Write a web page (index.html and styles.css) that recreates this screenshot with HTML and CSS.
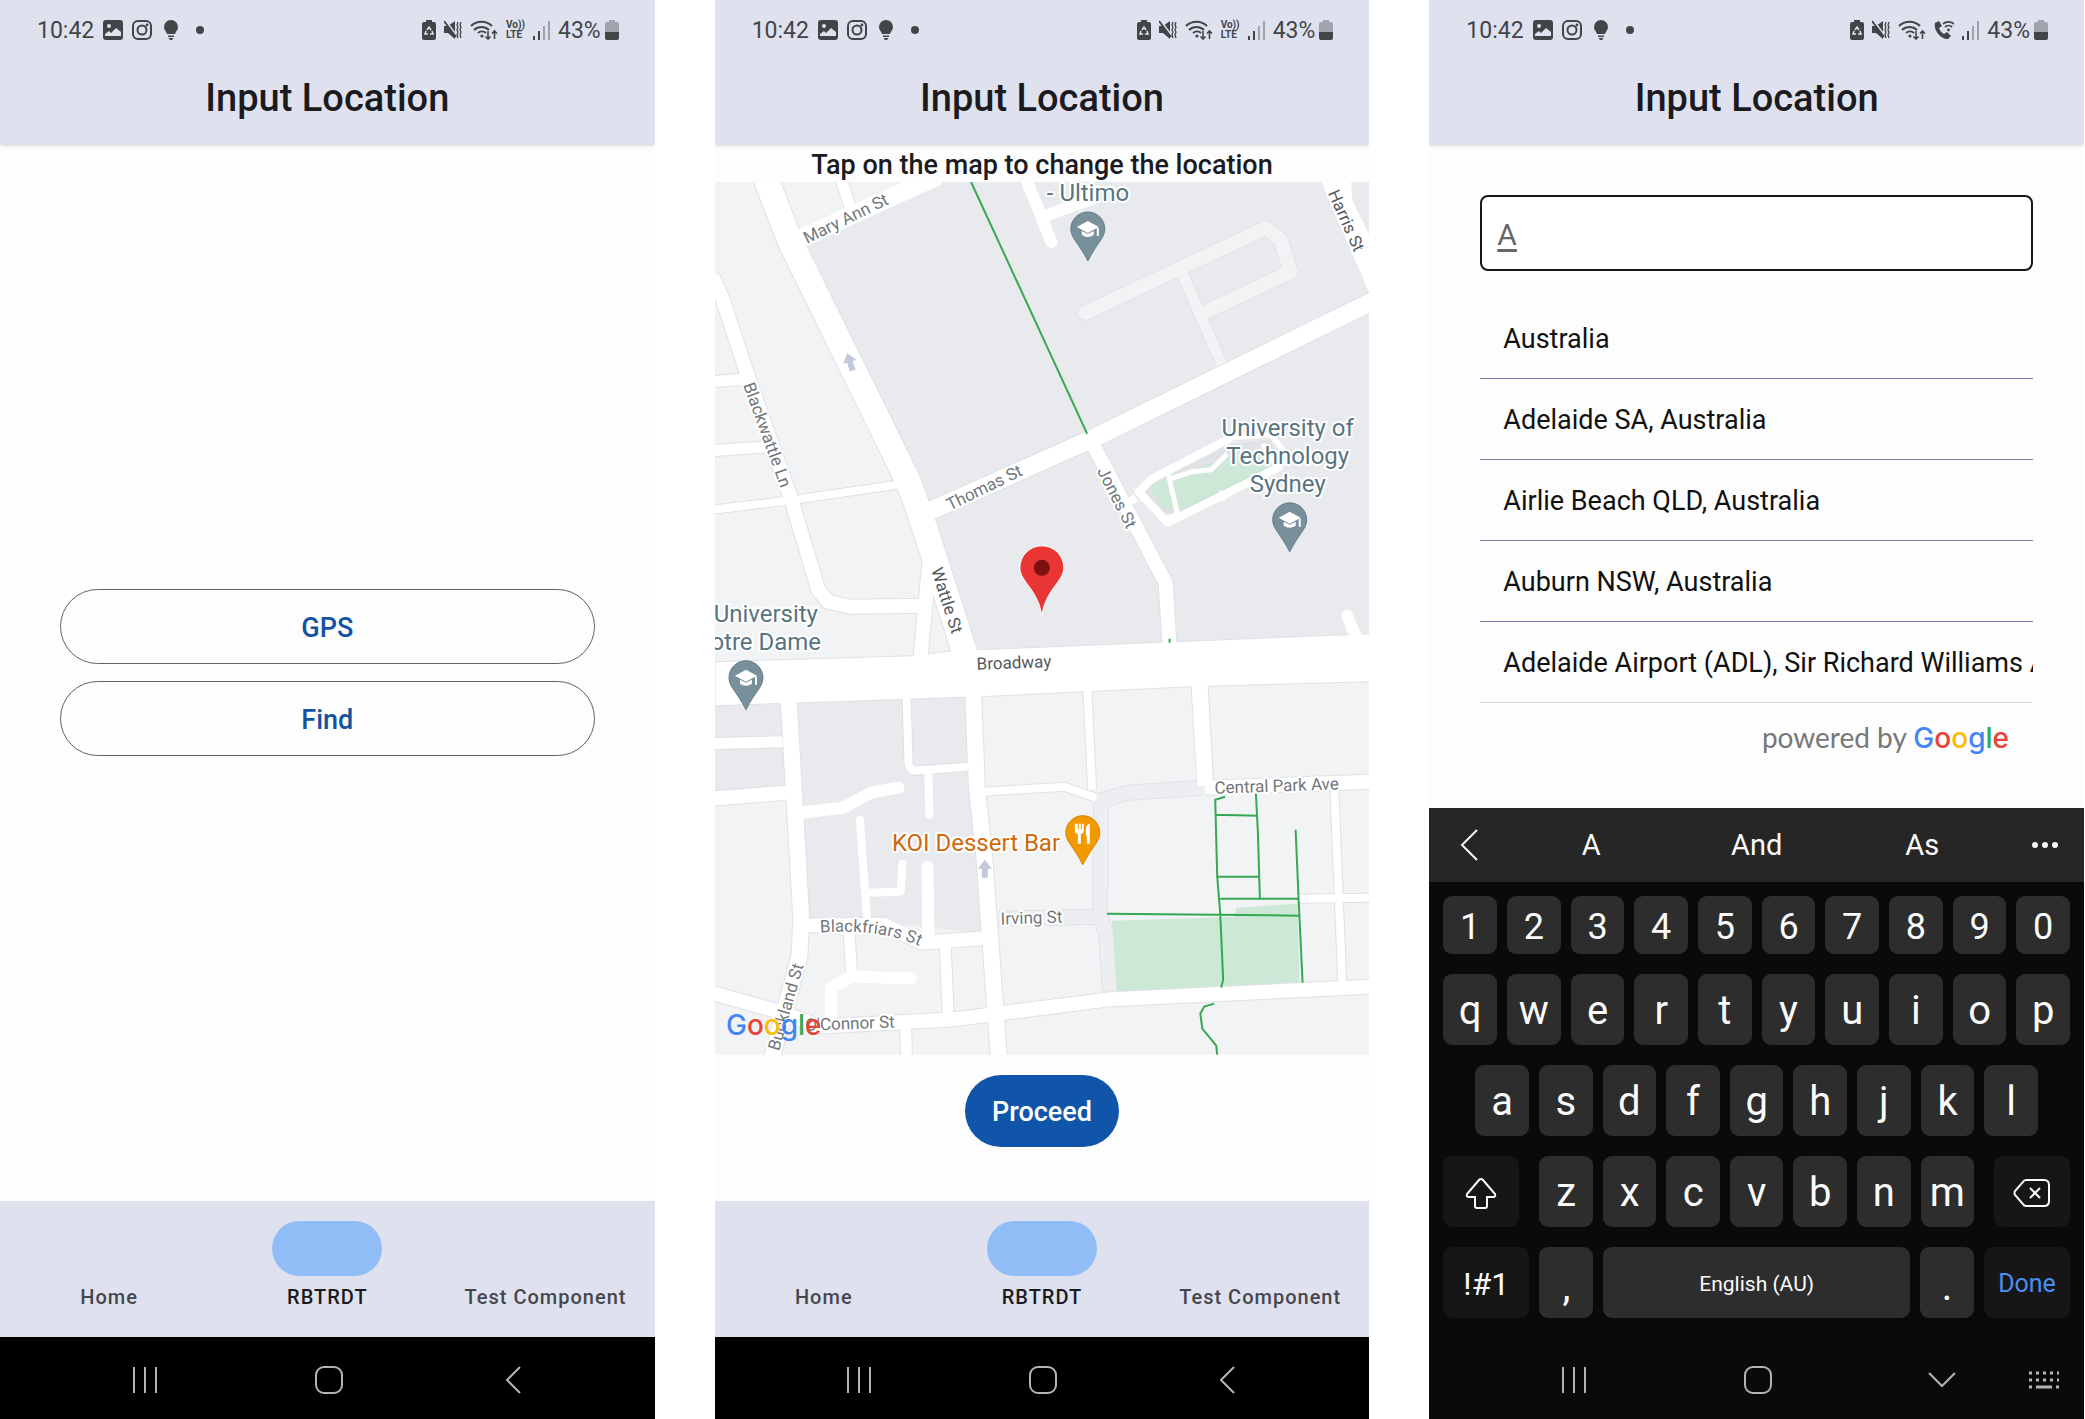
FILE: index.html
```html
<!DOCTYPE html>
<html lang="en">
<head>
<meta charset="utf-8">
<meta name="viewport" content="width=device-width, initial-scale=1">
<title>Input Location</title>
<link rel="stylesheet" href="styles.css">
</head>
<body>
<svg class="sprite" aria-hidden="true">
  <symbol id="i-photo" viewBox="0 0 20 20"><path fill-rule="evenodd" fill="currentColor" d="M3 0h14a3 3 0 0 1 3 3v14a3 3 0 0 1-3 3H3a3 3 0 0 1-3-3V3a3 3 0 0 1 3-3zM6 4a2 2 0 1 0 0 4 2 2 0 0 0 0-4zM2 16h16v-4l-5-4-5 5-2-2-4 3z"/></symbol>
  <symbol id="i-insta" viewBox="0 0 20 20"><rect x="1" y="1" width="18" height="18" rx="5" fill="none" stroke="currentColor" stroke-width="2"/><circle cx="10" cy="10" r="4.500" fill="none" stroke="currentColor" stroke-width="2"/><circle cx="15" cy="5" r="1.400" fill="currentColor"/></symbol>
  <symbol id="i-bulb" viewBox="0 0 14 20"><path fill="currentColor" d="M7 0a7 7 0 0 1 7 7c0 3-2 4-3 7H3C2 11 0 10 0 7a7 7 0 0 1 7-7zM4 15.500h6V17H4zM4.500 18h5L8 20H6z"/></symbol>
  <symbol id="i-saver" viewBox="0 0 14 20"><path fill="currentColor" d="M4 0h6v2h2a2 2 0 0 1 2 2v14a2 2 0 0 1-2 2H2a2 2 0 0 1-2-2V4a2 2 0 0 1 2-2h2z"/><path d="M5 10l2-3 2 3M10 11l1 3H8M6 14H3l1-3" fill="none" stroke="#dfe2ee" stroke-width="1.500"/></symbol>
  <symbol id="i-mute" viewBox="0 0 18 20"><path fill="currentColor" d="M0 6h4l7-5v18l-7-6H0z"/><path d="M1 0l12 16" stroke="#dfe2ee" stroke-width="2"/><path d="M0 1l12 16" stroke="currentColor" stroke-width="1.800"/><path d="M14 2l-1 3 1 2-1 3 1 2-1 3 1 3M17 2l-1 3 1 2-1 3 1 2-1 3 1 3" fill="none" stroke="currentColor" stroke-width="1.300"/></symbol>
  <symbol id="i-wifi" viewBox="0 0 28 20"><g fill="none" stroke="currentColor" stroke-width="2"><path d="M1 6a15 15 0 0 1 21 0M4 10a11 11 0 0 1 15 0M8 13a6 6 0 0 1 8 0"/><path stroke-width="1.600" d="M18 11v8M15.500 16.500L18 19l2.500-2.500M24.500 19v-8M22 13.500l2.500-2.500 2.500 2.500"/></g><circle cx="12" cy="16" r="1.600" fill="currentColor"/></symbol>
  <symbol id="i-call" viewBox="0 0 20 20"><path fill="currentColor" d="M1 3l4-2 3 5-3 2c1 3 3 5 5 6l3-2 4 4-3 3C8 20-1 11 1 3z"/><path d="M9 4a8 8 0 0 1 11 0M11 7a5 5 0 0 1 7 0" fill="none" stroke="currentColor" stroke-width="1.800"/><circle cx="14.500" cy="10" r="1.400" fill="currentColor"/></symbol>
  <symbol id="i-signal" viewBox="0 0 17 20"><path d="M1 16v4M6 11v9" stroke="currentColor" stroke-width="2"/><path d="M11 6v14M16 1v19" stroke="currentColor" stroke-width="2" opacity=".4"/></symbol>
  <symbol id="i-battery" viewBox="0 0 14 20"><path opacity=".4" fill="currentColor" d="M4 0h6v2h2a2 2 0 0 1 2 2v8H0V4a2 2 0 0 1 2-2h2z"/><path fill="currentColor" d="M0 12h14v6a2 2 0 0 1-2 2H2a2 2 0 0 1-2-2z"/></symbol>
  <symbol id="i-recents" viewBox="0 0 28 28"><path d="M3 1v26M14 1v26M25 1v26" fill="none" stroke="currentColor" stroke-width="2"/></symbol>
  <symbol id="i-home" viewBox="0 0 28 28"><rect x="1" y="1" width="26" height="26" rx="8" fill="none" stroke="currentColor" stroke-width="2"/></symbol>
  <symbol id="i-back" viewBox="0 0 28 28"><path d="M21 1L8 14l13 13" fill="none" stroke="currentColor" stroke-width="2"/></symbol>
  <symbol id="i-down" viewBox="0 0 28 28"><path d="M1 7l13 13L27 7" fill="none" stroke="currentColor" stroke-width="2"/></symbol>
  <symbol id="i-grad" viewBox="0 0 36 52"><path d="M18 1a17 17 0 0 1 17 17c0 9-8 14-17 32C9 32 1 27 1 18A17 17 0 0 1 18 1z" fill="#78909c" stroke="#607b87"/><path d="M18 10l11 6-11 6-11-6zM12 20l6 3 6-3v4q-6 4-12 0zM27 17h2v8h-2z" fill="#fff"/></symbol>
</svg>

<div class="screens">

<section class="phone">
  <header class="top">
    <div class="status">
      <span>10:42</span>
      <svg class="ic20"><use href="#i-photo"/></svg>
      <svg class="ic20"><use href="#i-insta"/></svg>
      <svg class="ic14"><use href="#i-bulb"/></svg>
      <i class="dot"></i>
      <span class="status-end">
        <svg class="ic14"><use href="#i-saver"/></svg>
        <svg class="ic18"><use href="#i-mute"/></svg>
        <svg class="ic28"><use href="#i-wifi"/></svg>
        <span class="volte"><b>Vo))</b><b>LTE</b></span>
        <svg class="ic17"><use href="#i-signal"/></svg>
        <span class="charge">43%<svg class="ic14"><use href="#i-battery"/></svg></span>
      </span>
    </div>
    <h1>Input Location</h1>
  </header>
  <main class="choices">
    <button class="outlined">GPS</button>
    <button class="outlined">Find</button>
  </main>
  <nav class="tabs">
    <a href="#home"><i></i>Home</a>
    <a href="#rbtrdt" class="active"><i></i>RBTRDT</a>
    <a href="#test"><i></i>Test Component</a>
  </nav>
  <div class="sysbar">
    <button aria-label="Recents"><svg><use href="#i-recents"/></svg></button>
    <button aria-label="Home"><svg><use href="#i-home"/></svg></button>
    <button aria-label="Back"><svg><use href="#i-back"/></svg></button>
  </div>
</section>

<section class="phone">
  <header class="top">
    <div class="status">
      <span>10:42</span>
      <svg class="ic20"><use href="#i-photo"/></svg>
      <svg class="ic20"><use href="#i-insta"/></svg>
      <svg class="ic14"><use href="#i-bulb"/></svg>
      <i class="dot"></i>
      <span class="status-end">
        <svg class="ic14"><use href="#i-saver"/></svg>
        <svg class="ic18"><use href="#i-mute"/></svg>
        <svg class="ic28"><use href="#i-wifi"/></svg>
        <span class="volte"><b>Vo))</b><b>LTE</b></span>
        <svg class="ic17"><use href="#i-signal"/></svg>
        <span class="charge">43%<svg class="ic14"><use href="#i-battery"/></svg></span>
      </span>
    </div>
    <h1>Input Location</h1>
  </header>
  <main class="mapview">
    <p class="hint">Tap on the map to change the location</p>
    <svg class="map" viewBox="0 0 655 873" role="img" aria-label="Map of Ultimo, Sydney">
      <rect width="655" height="873" fill="#f1f3f4"/>
      <g transform="scale(.993 1)">
      <!-- built-up blocks -->
      <g fill="#e8eaed">
        <path d="M88 58L225 0H660V453L255 470 224 381 205 330z"/>
        <path d="M0 522L70 520 76 614 0 620z"/>
        <path d="M81 518L255 514 272 752 182 742 92 738z"/>
      </g>
      <!-- service lanes -->
      <g fill="none" stroke-linejoin="round">
        <path class="lane-edge w16" d="M490 606L416 611 389 619 388 735 394 751 398 812M280 737L388 735"/>
        <path class="lane w14" d="M490 606L416 611 389 619 388 735 394 751 398 812M280 737L388 735"/>
        <g stroke-linecap="round">
          <path class="lane-edge w16" d="M373 131L555 46 570 58 580 90 492 131"/>
          <path class="lane-edge w13" d="M471 92L515 192"/>
          <path class="walk w14" d="M373 131L555 46 570 58 580 90 492 131"/>
          <path class="walk w11" d="M471 92L515 192"/>
        </g>
      </g>
      <!-- parks -->
      <path d="M400 739L524 735 525 726 587 722 589 801 405 811z" fill="#cde8d6"/>
      <path d="M428 308L520 262 560 258 570 282 460 338z" fill="#e0e2e5"/>
      <path d="M437 305L456 296 522 274 556 272 560 287 471 328 452 327z" fill="#cde8d6"/>
      <!-- streets: edge then surface -->
      <g class="edge">
        <path class="w27" d="M51 -4L76 60 194 298 206 330 224 385 253 475"/>
        <path class="w20" d="M206 334L382 256 665 118"/>
        <path class="w18" d="M74 514L81 635 87 738 85 775 57 877M260 510L264 608 271 671 282 821 286 877M488 500L494 600"/>
        <path class="w16" d="M-3 94L8 118 32 191 77 318 104 408 114 420 136 425 210 424M-4 617L72 611M216 380L207 476M380 261L454 401 458 464M87 744L170 743 208 761 280 756M494 606L660 600M-4 811L68 831 106 845 238 838 293 831 395 818 660 805"/>
        <path class="w13" d="M127 -3L136 25M-4 200L30 197M-4 269L50 265M-4 562L68 560M135 751L138 795M232 763L235 835M192 843L193 877"/>
        <path class="w10" d="M-4 328L72 319 190 302M193 514L195 583 199 589 255 585M375 504L380 608M271 610L352 605 384 616M624 606L632 801M587 717L660 716"/>
      </g>
      <path d="M0 480L199 474 240 469 660 452V500L479 505 267 515 0 524z" fill="#fff" stroke="#dfe1e5"/>
      <path d="M611 0H641L642 18 660 55V113z" fill="#fff"/>
      <g class="road">
        <path class="w25" d="M51 -4L76 60 194 298 206 330 224 385 253 475"/>
        <path class="w18" d="M206 334L382 256 665 118M85 57L225 -6"/>
        <path class="w16" d="M74 514L81 635 87 738 85 775 57 877M260 510L264 608 271 671 282 821 286 877M488 500L494 604"/>
        <path class="w14" d="M-3 94L8 118 32 191 77 318 104 408 114 420 136 425 210 424M-4 617L72 611M216 380L207 476M380 261L454 401 458 464M87 744L170 743 208 761 280 756M494 606L660 600M-4 811L68 831 106 845 238 838 293 831 395 818 660 805"/>
        <path class="w11" d="M127 -3L136 25M-4 200L30 197M-4 269L50 265M-4 562L68 560M135 751L138 795M232 763L235 835M192 843L193 877"/>
        <path class="w8" d="M-4 328L72 319 190 302M193 514L195 583 199 589 255 585M375 504L380 608M271 610L352 605 384 616M624 606L632 801M587 717L660 716"/>
        <g stroke-linecap="round">
          <path class="w12" d="M313 -4L339 60M335 33L382 16M637 434L647 458M87 631L129 626 157 611 185 606M214 685L215 751M197 797L138 795 117 806 117 840"/>
          <path class="w8" d="M215 590L216 633M146 638L153 735M154 711L187 710 189 682"/>
        </g>
        <path class="w8" d="M413 323L424 316M571 284L456 341 427 310 440 297 520 256"/>
        <path class="w5" d="M520 256L560 253 574 270 571 284M456 288L458 298 466 332M456 298L480 290 500 288 516 272M552 262L562 280M508 310L514 318M454 336L470 332"/>
      </g>
      <!-- cycleways -->
      <g fill="none" stroke="#34a853" stroke-width="2">
        <path d="M258 0L375 252M458 457v4"/>
        <path d="M514 615L504 618 506 695 509 731 512 798 510 806M545 612L547 651 549 717M504 633L547 634M507 695L548 695M509 717L587 717M395 732L588 734M585 648L588 717 592 801M503 822L493 825 489 832 491 847 505 864 506 873"/>
      </g>
      </g>
      <g fill="#c3c9dd">
        <path d="M0-9L7 0H3V9H-3V0H-7z" transform="translate(135 180) rotate(-18)"/>
        <path d="M0-9L7 0H3V9H-3V0H-7z" transform="translate(270 687)"/>
      </g>
      <!-- street names -->
      <g class="street">
        <text transform="translate(92 62) rotate(-26)">Mary Ann St</text>
        <text transform="translate(28 203) rotate(70)">Blackwattle Ln</text>
        <text transform="translate(235 329) rotate(-26)">Thomas St</text>
        <text transform="translate(382 289) rotate(63)">Jones St</text>
        <text class="major" transform="translate(216 388) rotate(72)">Wattle St</text>
        <text class="major" transform="translate(613 11) rotate(66)">Harris St</text>
        <text class="major" transform="translate(262 488) rotate(-2)">Broadway</text>
        <text transform="translate(500 612) rotate(-2)">Central Park Ave</text>
        <text transform="translate(286 743) rotate(-2)">Irving St</text>
        <path id="bf" d="M105 751Q170 746 212 768" fill="none"/>
        <text><textPath href="#bf">Blackfriars St</textPath></text>
        <text transform="translate(180 846) rotate(-2)" text-anchor="end">O'Connor St</text>
        <text transform="translate(64 870) rotate(-74)">Buckland St</text>
      </g>
      <g class="place">
        <text x="332" y="19">- Ultimo</text>
        <text x="573" y="254" text-anchor="middle">University of</text>
        <text x="573" y="282" text-anchor="middle">Technology</text>
        <text x="573" y="310" text-anchor="middle">Sydney</text>
        <text x="103" y="440" text-anchor="end">University</text>
        <text x="106" y="468" text-anchor="end">Notre Dame</text>
        <text class="food" x="177" y="669">KOI Dessert Bar</text>
      </g>
      <use href="#i-grad" x="355" y="29" width="36" height="52"/>
      <use href="#i-grad" x="557" y="320" width="36" height="52"/>
      <use href="#i-grad" x="13" y="478" width="36" height="52"/>
      <g transform="translate(350 633)">
        <path d="M18 1a17 17 0 0 1 17 17c0 9-8 14-17 32C9 32 1 27 1 18A17 17 0 0 1 18 1z" fill="#f29900" stroke="#d98300"/>
        <path d="M10 9v7q0 3 3 3v10h3V19q3 0 3-3V9h-2v6h-1V9h-2v6h-1V9zM25 9q-4 1-4 6v6h1v8h3z" fill="#fff"/>
      </g>
      <g transform="translate(327 364)">
        <path d="M0 0a22 22 0 0 1 22 22c0 14-19 22-22 49C-3 44-22 36-22 22A22 22 0 0 1 0 0z" fill="#ea3535" stroke="#fff"/>
        <circle cy="22" r="8" fill="#7d1010"/>
      </g>
      <text class="glogo" x="11" y="853"><tspan class="gb">G</tspan><tspan class="gr">o</tspan><tspan class="gy">o</tspan><tspan class="gb">g</tspan><tspan class="gg">l</tspan><tspan class="gr">e</tspan></text>
    </svg>
    <div class="actions"><button class="filled">Proceed</button></div>
  </main>
  <nav class="tabs">
    <a href="#home"><i></i>Home</a>
    <a href="#rbtrdt" class="active"><i></i>RBTRDT</a>
    <a href="#test"><i></i>Test Component</a>
  </nav>
  <div class="sysbar">
    <button aria-label="Recents"><svg><use href="#i-recents"/></svg></button>
    <button aria-label="Home"><svg><use href="#i-home"/></svg></button>
    <button aria-label="Back"><svg><use href="#i-back"/></svg></button>
  </div>
</section>

<section class="phone">
  <header class="top">
    <div class="status">
      <span>10:42</span>
      <svg class="ic20"><use href="#i-photo"/></svg>
      <svg class="ic20"><use href="#i-insta"/></svg>
      <svg class="ic14"><use href="#i-bulb"/></svg>
      <i class="dot"></i>
      <span class="status-end">
        <svg class="ic14"><use href="#i-saver"/></svg>
        <svg class="ic18"><use href="#i-mute"/></svg>
        <svg class="ic28"><use href="#i-wifi"/></svg>
        <svg class="ic20"><use href="#i-call"/></svg>
        <svg class="ic17"><use href="#i-signal"/></svg>
        <span class="charge">43%<svg class="ic14"><use href="#i-battery"/></svg></span>
      </span>
    </div>
    <h1>Input Location</h1>
  </header>
  <main class="search">
    <input class="field" type="text" value="A" aria-label="Location">
    <ul class="results">
      <li>Australia</li>
      <li>Adelaide SA, Australia</li>
      <li>Airlie Beach QLD, Australia</li>
      <li>Auburn NSW, Australia</li>
      <li>Adelaide Airport (ADL), Sir Richard Williams A</li>
    </ul>
    <p class="powered">powered by <span class="glogo"><span class="gb">G</span><span class="gr">o</span><span class="gy">o</span><span class="gb">g</span><span class="gg">l</span><span class="gr">e</span></span></p>
  </main>
  <div class="keyboard">
    <div class="suggest">
      <button class="side" aria-label="Collapse"><svg viewBox="0 0 18 32"><path d="M17 1L2 16l15 15" fill="none" stroke="currentColor" stroke-width="2"/></svg></button>
      <button>A</button><button>And</button><button>As</button>
      <button class="side" aria-label="More"><svg viewBox="0 0 26 32"><g fill="currentColor"><circle cx="3" cy="16" r="3"/><circle cx="13" cy="16" r="3"/><circle cx="23" cy="16" r="3"/></g></svg></button>
    </div>
    <div class="keys">
      <div class="row digits"><button>1</button><button>2</button><button>3</button><button>4</button><button>5</button><button>6</button><button>7</button><button>8</button><button>9</button><button>0</button></div>
      <div class="row"><button>q</button><button>w</button><button>e</button><button>r</button><button>t</button><button>y</button><button>u</button><button>i</button><button>o</button><button>p</button></div>
      <div class="row inset"><button>a</button><button>s</button><button>d</button><button>f</button><button>g</button><button>h</button><button>j</button><button>k</button><button>l</button></div>
      <div class="row">
        <button class="fn shift" aria-label="Shift"><svg viewBox="0 0 32 32"><path d="M16 2q1 0 2 1l12 14q1 3-2 3h-6v9q0 2-2 2h-8q-2 0-2-2v-9H4q-3 0-2-3L14 3q1-1 2-1z" fill="none" stroke="currentColor" stroke-width="2"/></svg></button>
        <button>z</button><button>x</button><button>c</button><button>v</button><button>b</button><button>n</button><button>m</button>
        <button class="fn erase" aria-label="Delete"><svg viewBox="0 0 38 28"><path d="M13 1h18q5 0 5 5v16q0 5-5 5H13q-2 0-3-2L2 16q-1-2 0-4l8-9q1-2 3-2zM17 9l10 10M27 9L17 19" fill="none" stroke="currentColor" stroke-width="2"/></svg></button>
      </div>
      <div class="row">
        <button class="fn sym">!#1</button><button class="one">,</button><button class="space">English (AU)</button><button class="one">.</button><button class="fn done">Done</button>
      </div>
    </div>
  </div>
  <div class="sysbar dim">
    <button aria-label="Recents"><svg><use href="#i-recents"/></svg></button>
    <button aria-label="Home"><svg><use href="#i-home"/></svg></button>
    <button aria-label="Hide keyboard"><svg><use href="#i-down"/></svg></button>
    <button class="switch" aria-label="Switch keyboard"><svg viewBox="0 0 32 20"><path d="M1 3h30M1 10h30" stroke="currentColor" stroke-width="3" stroke-dasharray="3 4" fill="none"/><path d="M1 17h3M8 17h16M28 17h3" stroke="currentColor" stroke-width="3"/></svg></button>
  </div>
</section>

</div>
</body>
</html>
```
FILE: styles.css
```css
* { box-sizing: border-box; }
body { margin: 0; background: #fff; font-family: Roboto, "Liberation Sans", sans-serif; color: #1b1b1f; }
button { border: 0; padding: 0; margin: 0; background: none; font: inherit; color: inherit; cursor: pointer; }
h1, p, ul { margin: 0; padding: 0; font-weight: inherit; }
.sprite { position: absolute; width: 0; height: 0; }

.screens { display: grid; grid-template-columns: repeat(3, minmax(0, 1fr)); gap: 60px; padding-right: 1px; min-height: 100vh; }
.phone { display: flex; flex-direction: column; background: #fdfdfd; overflow: hidden; }
.phone main { flex: 1; }

/* header */
.top { height: 144px; background: #dfe2ee; box-shadow: 0 1px 4px rgba(0, 0, 0, .2); }
.status { display: flex; align-items: center; gap: 9px; height: 60px; padding: 0 36px 0 37px; font-size: 23px; color: #424548; }
.status svg { height: 20px; flex: none; display: block; }
.ic14 { width: 14px; }
.ic17 { width: 17px; }
.ic18 { width: 18px; }
.ic20 { width: 20px; }
.ic28 { width: 28px; }
.status .ic20 + .ic14 { margin-left: 3px; }
.dot { width: 8px; height: 8px; border-radius: 50%; background: currentColor; margin-left: 9px; }
.status-end { margin-left: auto; display: flex; align-items: center; gap: 8px; }
.charge { display: flex; align-items: center; gap: 4px; }
.volte { display: flex; flex-direction: column; font-size: 10px; line-height: 10px; }
.top h1 { font-size: 38px; font-weight: 500; line-height: 76px; text-align: center; }

/* bottom tabs */
.tabs { display: grid; grid-template-columns: repeat(3, minmax(0, 1fr)); height: 136px; background: #dfe2ee; padding-top: 20px; }
.tabs a { display: flex; flex-direction: column; align-items: center; gap: 8px; font-size: 20px; line-height: 26px; font-weight: 500; letter-spacing: 1px; color: #46464f; text-decoration: none; white-space: nowrap; }
.tabs i { width: 110px; height: 55px; border-radius: 28px; }
.tabs .active { color: #1b1b1f; }
.tabs .active i { background: #90bdf6; }

/* system navigation */
.sysbar { display: grid; grid-template-columns: minmax(0, 1fr) 184px 184px 184px minmax(0, 1fr); align-items: center; height: 82px; padding: 4px 0 0 3px; background: #000; color: #b4b4b4; }
.sysbar button { display: flex; justify-content: center; }
.sysbar button:first-child { grid-column: 2; }
.sysbar svg { width: 28px; height: 28px; flex: none; }
.sysbar.dim { background: #0a0a0a; }
.sysbar .switch { justify-content: flex-end; padding-right: 24px; }
.sysbar .switch svg { width: 32px; height: 20px; }

/* choices */
.choices { display: flex; flex-direction: column; justify-content: center; gap: 17px; padding: 0 60px; }
.outlined { height: 75px; padding-top: 2px; border: 1px solid #5f6168; border-radius: 38px; font-size: 27px; font-weight: 500; color: #1453a3; }

/* map */
.hint { height: 38px; line-height: 42px; font-size: 27px; font-weight: 500; text-align: center; }
.map { display: block; width: 100%; height: auto; }
.actions { display: flex; justify-content: center; padding: 20px; }
.filled { height: 72px; padding: 2px 27px 0; border-radius: 36px; background: #1055aa; color: #fff; font-size: 27px; font-weight: 500; }
.road { fill: none; stroke: #fff; stroke-linejoin: round; }
.edge { fill: none; stroke: #dfe1e5; stroke-linejoin: round; }
.lane { stroke: #eceef1; }
.lane-edge { stroke: #e0e2e6; }
.walk { stroke: #f1f3f4; }
.w5 { stroke-width: 5px; }
.w8 { stroke-width: 8px; }
.w10 { stroke-width: 10px; }
.w11 { stroke-width: 11px; }
.w12 { stroke-width: 12px; }
.w13 { stroke-width: 13px; }
.w14 { stroke-width: 14px; }
.w16 { stroke-width: 16px; }
.w18 { stroke-width: 18px; }
.w20 { stroke-width: 20px; }
.w25 { stroke-width: 25px; }
.w27 { stroke-width: 27px; }
.street text, .place text { stroke: #fff; stroke-width: 4px; stroke-linejoin: round; paint-order: stroke; }
.street { font-size: 17px; fill: #72777c; }
.street .major { fill: #54585c; }
.place { font-size: 24px; fill: #587480; }
.place .food { fill: #d0690c; }

.glogo { font-family: Inter, sans-serif; font-size: 28px; font-weight: 500; }
.gb { color: #4285f4; fill: #4285f4; }
.gr { color: #ea4335; fill: #ea4335; }
.gy { color: #fbbc05; fill: #fbbc05; }
.gg { color: #34a853; fill: #34a853; }

/* search */
.search { padding: 51px 51px 0; }
.field { display: block; width: 100%; height: 76px; border: 2px solid #17171a; border-radius: 8px; padding: 2px 15px 0; background: #fff; font: 30px Roboto, sans-serif; color: #66666a; text-decoration: underline; text-underline-offset: 4px; outline: 0; }
.results { list-style: none; margin-top: 27px; }
.results li { height: 81px; line-height: 83px; padding-left: 23px; font-size: 27px; color: #111; white-space: nowrap; overflow: hidden; border-bottom: 1px solid #7c7ca6; }
.results li:last-child { border-color: #dcdce0; }
.powered { padding: 16px 24px 0 0; text-align: right; font-family: Lato, sans-serif; font-size: 28px; line-height: 36px; color: #77777a; }

/* keyboard */
.keyboard { background: #0a0a0a; color: #fafafa; }
.suggest { display: grid; grid-template-columns: 79px 1fr 1fr 1fr 79px; align-items: center; height: 74px; background: #262626; font-size: 29px; }
.suggest svg { height: 32px; display: block; margin: auto; }
.keys { display: flex; flex-direction: column; gap: 20px; padding: 14px 14px 19px; }
.row { display: flex; gap: 10px; height: 71px; font-size: 40px; }
.row button { flex: 1; min-width: 0; padding-top: 2px; border-radius: 9px; background: #2d2d2d; }
.digits { height: 58px; font-size: 36px; }
.digits button { padding-top: 4px; }
.inset { padding: 0 32px; }
.row .fn { background: #161616; flex: 0 0 76px; display: flex; align-items: center; justify-content: center; }
.row .shift { margin-right: 10px; }
.row .erase { margin-left: 10px; }
.shift svg { width: 32px; height: 32px; }
.erase svg { width: 38px; height: 28px; }
.row .one { flex: 0 0 54px; padding-top: 8px; }
.row .space { font-size: 21px; }
.row .sym { flex-basis: 86px; font-size: 32px; }
.row .done { flex-basis: 86px; font-size: 25px; color: #4a8ff0; }
```
